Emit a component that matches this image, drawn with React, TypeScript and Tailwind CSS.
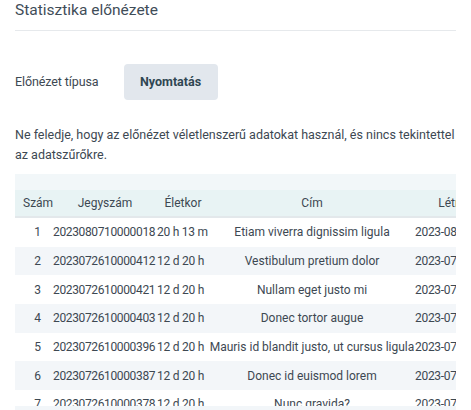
const rows = [
  { n: 1, id: '2023080710000018', age: '20 h 13 m', title: 'Etiam viverra dignissim ligula', date: '2023-08-07 10:45' },
  { n: 2, id: '2023072610000412', age: '12 d 20 h', title: 'Vestibulum pretium dolor', date: '2023-07-26 14:12' },
  { n: 3, id: '2023072610000421', age: '12 d 20 h', title: 'Nullam eget justo mi', date: '2023-07-26 14:12' },
  { n: 4, id: '2023072610000403', age: '12 d 20 h', title: 'Donec tortor augue', date: '2023-07-26 14:12' },
  { n: 5, id: '2023072610000396', age: '12 d 20 h', title: 'Mauris id blandit justo, ut cursus ligula', date: '2023-07-26 14:12' },
  { n: 6, id: '2023072610000387', age: '12 d 20 h', title: 'Donec id euismod lorem', date: '2023-07-26 14:12' },
  { n: 7, id: '2023072610000378', age: '12 d 20 h', title: 'Nunc gravida?', date: '2023-07-26 14:12' },
];

const cols = 'grid grid-cols-[38px_104px_52px_206px_105px]';

export default function App() {
  return (
    <div className="w-[471px] h-[410px] overflow-hidden bg-white px-[15px] text-[#3d4852] font-['Roboto',sans-serif]">
      {/* Header */}
      <div className="h-[31px] border-b border-[#e6e9ec] flex items-center">
        <h1 className="text-[15.5px] text-[#3f4d58] leading-none -mt-[9px]">Statisztika előnézete</h1>
      </div>

      {/* Preview type */}
      <div className="mt-[33px] flex items-center gap-[25px]">
        <span className="text-[12.5px] tracking-[-0.1px]">Előnézet típusa</span>
        <button className="h-[36px] w-[94px] rounded-[4px] bg-[#e2e7ed] text-[12.5px] font-bold text-[#2f4652]">
          Nyomtatás
        </button>
      </div>

      <p className="mt-[25px] text-[12.5px] leading-[20px]">
        Ne feledje, hogy az előnézet véletlenszerű adatokat használ, és nincs tekintettel az adatszűrőkre.
      </p>

      {/* Table */}
      <div className="mt-[9px] h-[232px] overflow-hidden text-[12px]">
        <div className="w-[520px]">
          <div className="h-[16px] bg-[#f2f7f9]" />
          <div className={`${cols} h-[28px] items-center bg-[#e8f3f4] border-b-2 border-[#e3e8eb]`}>
            <div className="pl-[8px]">Szám</div>
            <div className="text-center">Jegyszám</div>
            <div className="text-center">Életkor</div>
            <div className="text-center">Cím</div>
            <div className="text-center">Létrehozva</div>
          </div>
          {rows.map((r) => (
            <div
              key={r.n}
              className={`${cols} h-[28.7px] items-center whitespace-nowrap ${r.n % 2 === 0 ? 'bg-[#f3f6f9]' : 'bg-white'}`}
            >
              <div className="text-right pr-[12px]">{r.n}</div>
              <div className="tracking-[-0.36px]">{r.id}</div>
              <div className="tracking-[-0.25px]">{r.age}</div>
              <div className="text-center">{r.title}</div>
              <div className="tracking-[-0.3px]">{r.date}</div>
            </div>
          ))}
        </div>
      </div>
      <div className="h-[6px] bg-[#f2f6f9]" />
    </div>
  );
}
